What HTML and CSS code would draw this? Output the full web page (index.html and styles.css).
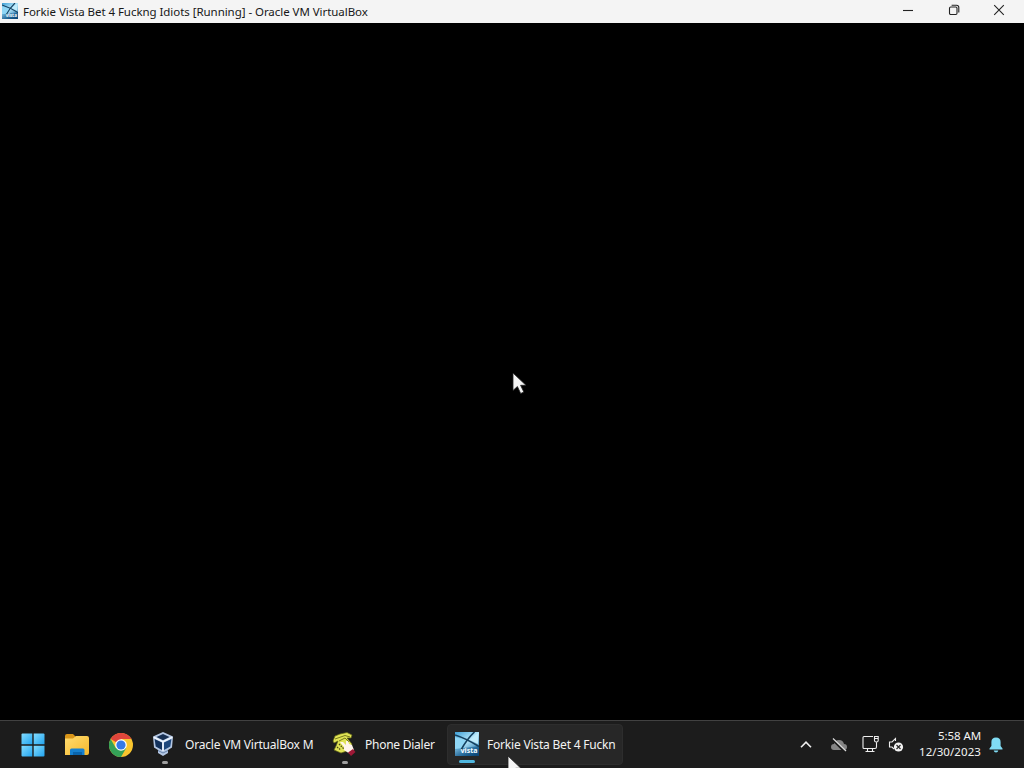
FILE: index.html
```html
<!DOCTYPE html>
<html lang="en">
<head>
<meta charset="utf-8">
<title>Oracle VM VirtualBox</title>
<link rel="stylesheet" href="styles.css">
</head>
<body>
<svg width="0" height="0" class="defs">
  <defs>
    <linearGradient id="sky" x1="0" y1="0" x2=".7" y2="1"><stop offset="0" stop-color="#3d9fd6"/><stop offset=".5" stop-color="#b5e6fa"/><stop offset="1" stop-color="#2577ae"/></linearGradient>
    <linearGradient id="win" x1="0" y1="0" x2="1" y2="1"><stop offset="0" stop-color="#82dcff"/><stop offset="1" stop-color="#22a4ef"/></linearGradient>
    <linearGradient id="folder" x1="0" y1="0" x2="1" y2="1"><stop offset="0" stop-color="#ffdc70"/><stop offset="1" stop-color="#f5b72c"/></linearGradient>
    <linearGradient id="shade" x1="0" y1="0" x2="1" y2="1"><stop offset="0" stop-color="#1e6fa6" stop-opacity=".3"/><stop offset="1" stop-color="#0a4170"/></linearGradient>
    <symbol id="vista" viewBox="0 0 24 24">
      <rect width="24" height="24" fill="url(#sky)"/>
      <path d="M0 5L12 9L6 18H0Z" fill="#8fd6f5"/>
      <path d="M15 8L23 1V12Z" fill="#c0ecfc"/>
      <path d="M0 17L24 14V24H0Z" fill="url(#shade)"/>
      <path d="M0 3Q11 6.5 24 14.5" fill="none" stroke="#14405f" stroke-width="1.6"/>
      <path d="M19.5 0Q12 7 6 18" fill="none" stroke="#14405f" stroke-width="1.6"/>
      <text x="5.5" y="20.5" class="vista-text" textLength="17" lengthAdjust="spacingAndGlyphs">vista</text>
    </symbol>
    <symbol id="pointer" viewBox="0 0 16 24"><path d="M1 1V18.5L5.4 14.5L8.7 21.5L11.8 20L8.6 13.3H14Z" fill="#f5f5f5" stroke="#222" stroke-width=".8"/></symbol>
  </defs>
</svg>
<div class="desktop">
  <header class="titlebar">
    <svg class="title-icon"><use href="#vista"/></svg>
    <span class="title">Forkie Vista Bet 4 Fuckng Idiots [Running] - Oracle VM VirtualBox</span>
    <div class="controls">
      <svg viewBox="0 0 12 12"><path d="M1 6.5H11"/></svg>
      <svg viewBox="0 0 12 12"><rect x="1.5" y="3" width="7.5" height="7.5" rx="1.2"/><path d="M3.6 1.2H8.5Q10.8 1.2 10.8 3.5V8.5"/></svg>
      <svg viewBox="0 0 12 12"><path d="M1.2 1.2L10.8 10.8M10.8 1.2L1.2 10.8"/></svg>
    </div>
  </header>
  <main class="screen"></main>
  <footer class="taskbar">
    <div class="launchers">
      <svg viewBox="0 0 24 24"><g fill="url(#win)"><path d="M1.5 .5H11.3V11.3H.5V1.5Q.5 .5 1.5 .5Z"/><path d="M12.7 .5H22.5Q23.5 .5 23.5 1.5V11.3H12.7Z"/><path d="M.5 12.7H11.3V23.5H1.5Q.5 23.5 .5 22.5Z"/><path d="M12.7 12.7H23.5V22.5Q23.5 23.5 22.5 23.5H12.7Z"/></g></svg>
      <svg viewBox="0 0 24 24"><path d="M0 3Q0 1 2 1H8L11 4V8H0Z" fill="#d99518"/><path d="M0 5.5H8L11 3H22Q24 3 24 5V20Q24 22 22 22H0Z" fill="url(#folder)"/><path d="M5 22V17Q5 15.5 6.5 15.5H18Q19.5 15.5 19.5 17V22Z" fill="#1680cf"/><path d="M8 22V19H17V22Z" fill="#0964ac"/></svg>
      <svg viewBox="0 0 24 24"><circle cx="12" cy="12" r="12" fill="#f9c52e"/><path d="M12 12L1.6 6A12 12 0 0 1 22.4 6H12Z" fill="#df453b"/><path d="M1.6 6A12 12 0 0 0 12 24L17.2 15L12 12L6.8 15Z" fill="#34a257"/><circle cx="12" cy="12" r="5.8" fill="#fff"/><circle cx="12" cy="12" r="4.6" fill="#3479e7"/></svg>
    </div>
    <div class="task vb">
      <svg viewBox="0 0 24 26" class="task-icon"><path d="M11 0L21 4.5L20 15.5L16 18V21L11 24L6 21V18L2 15.5L1 4.5Z" fill="#b4c7e3"/><path d="M4.5 5L11 2L17.5 5L11 8.2Z" fill="#173053"/><path d="M2.6 7L10 10.6V18L3.7 14.6Z" fill="#12315c"/><path d="M12 10.6L19.4 7L18.3 14.6L12 18Z" fill="#1d477d"/><path d="M1.7 5.3L11 9.6L20.3 5.3M11 9.5V19" fill="none" stroke="#edf5ff" stroke-width="1.5"/><path d="M6 18.5L11 21L16 18.5" fill="none" stroke="#6581a9"/></svg>
      <span class="label">Oracle VM VirtualBox M</span><i class="dot"></i>
    </div>
    <div class="task phone">
      <svg viewBox="0 0 24 26" class="task-icon"><path d="M1 9L3 4L8 2L15 .5L20 3L19 6L15 6L20 12L18 18L9 21L2 18L4 14L6 9L2 11Z" fill="#e0e355" stroke="#626515" stroke-width=".7"/><path d="M3 7L13 3.5L18 5M7 9L13 6L17 10" fill="none" stroke="#77791e" stroke-width="1"/><path d="M5 15L9 18M7 12L12 17" stroke="#4a4b16" stroke-width="1.3" stroke-dasharray="1.5 1"/><path d="M8 10L11 10L14 13V9L16 9L17 12L20 13L22 18L18 22L12 18L12 15Z" fill="#fff5eb"/><path d="M16 20.5L21 17L23.5 20L19 24Z" fill="#9d1836"/></svg>
      <span class="label">Phone Dialer</span><i class="dot"></i>
    </div>
    <div class="task active">
      <svg class="task-icon square"><use href="#vista"/></svg>
      <span class="label">Forkie Vista Bet 4 Fuckn</span><i class="dot current"></i>
    </div>
    <div class="tray">
      <svg class="chevron" viewBox="0 0 12 12"><path d="M1 8.2L6 3.2L11 8.2"/></svg>
      <svg class="cloud" viewBox="0 0 18 16"><path d="M4 13Q1 13 1 10Q1 7 4 7Q5 3 9 3Q13 3 14 7Q17 7 17 10Q17 13 14 13Z" fill="#858585"/><path d="M2 2L15 15" stroke="#1c1c1c" stroke-width="2.4"/><path d="M3 1.5L16 14" stroke="#ddd" stroke-width="1.2"/></svg>
      <svg class="network" viewBox="0 0 18 18"><path d="M11 1.5H2Q1 1.5 1 2.5V12.5Q1 13.5 2 13.5H13Q14.5 13.5 14.5 12V7M5.5 14V16.5M10.5 14V16.5M3.5 16.5H12.5M12.5 1.5H16.2V5.5Q16.2 7 14.4 7Q12.5 7 12.5 5.5ZM12.5 3.5H16"/></svg>
      <svg class="sound" viewBox="0 0 16 16"><path d="M7.5 4V1.5L4 5H1.5V10H4L6 12" fill="none" stroke="#eee" stroke-width="1.1"/><circle cx="10.5" cy="10" r="4.6" fill="#f3f3f3"/><path d="M8.5 8L12.5 12M12.5 8L8.5 12" stroke="#292929" stroke-width="1.2"/></svg>
      <div class="clock"><span class="time">5:58 AM</span><span class="date">12/30/2023</span></div>
      <svg class="bell" viewBox="0 0 14 16"><path d="M7 .5Q2.4 .5 2.4 5V9L.5 11.5V12.5H13.5V11.5L11.6 9V5Q11.6 .5 7 .5Z"/><path d="M4.7 13.5H9.3Q9 15.5 7 15.5Q5 15.5 4.7 13.5Z"/></svg>
    </div>
  </footer>
  <svg class="pointer center"><use href="#pointer"/></svg>
  <svg class="pointer lower"><use href="#pointer"/></svg>
</div>
</body>
</html>
```
FILE: styles.css
```css
* { box-sizing: border-box; }
body { margin: 0; background: #000; overflow: hidden; font: 12px/16px "Noto Sans", sans-serif; }
.defs { position: absolute; }
.desktop { position: relative; width: 1024px; height: 768px; display: flex; flex-direction: column; overflow: hidden; }
.titlebar { height: 23px; background: #f4f4f4; color: #171717; display: flex; align-items: center; padding: 0 19px 0 2px; }
.title-icon { width: 16px; height: 16px; margin-top: -1px; }
.title { margin-left: 5px; font-size: 11.5px; letter-spacing: -.05px; white-space: nowrap; }
.controls { display: flex; margin-left: auto; gap: 33.5px; margin-top: -3px; }
.controls svg { width: 12px; height: 12px; fill: none; stroke: #222; stroke-width: 1.1; }
.vista-text { font: bold 7px "Noto Sans", sans-serif; fill: #f4fbff; }
.screen { flex: 1; background: #000; }
.taskbar { height: 48px; background: #1c1c1c; border-top: 1px solid #414141; display: flex; align-items: center; color: #f3f3f3; padding: 0 20px 0 20.5px; }
.launchers { display: flex; gap: 20.3px; width: 131.5px; }
.launchers svg { width: 24px; height: 24px; flex: none; }
.task { position: relative; height: 41px; display: flex; align-items: center; padding-left: 7px; border-radius: 4px; }
.vb { width: 180px; }
.phone { width: 115px; }
.vb, .phone { padding-left: 0; }
.active { width: 176px; background: #272727; border: 1px solid #2d2d2d; }
.task-icon { width: 24px; height: 26px; flex: none; }
.square { height: 24px; margin-top: -2px; }
.label { margin-left: 9px; white-space: nowrap; letter-spacing: -.2px; }
.phone .label { letter-spacing: -.25px; }
.active .label { margin-left: 8px; }
.dot { position: absolute; left: 10px; bottom: 1px; width: 6px; height: 3px; border-radius: 2px; background: #a0a0a0; }
.current { left: 11px; width: 16px; background: #50b7df; }
.tray { margin-left: auto; display: flex; align-items: center; }
.chevron { width: 12px; height: 12px; fill: none; stroke: #eee; stroke-width: 1.6; margin-right: 18px; }
.cloud { width: 18px; height: 16px; margin-right: 14px; }
.network { width: 18px; height: 18px; fill: none; stroke: #eee; stroke-width: 1.1; margin-right: 8px; margin-top: -1px; }
.sound { width: 16px; height: 16px; }
.clock { width: 77px; margin-top: -2px; display: flex; flex-direction: column; align-items: flex-end; font-size: 11.5px; letter-spacing: .08px; white-space: nowrap; }
.time { letter-spacing: -.1px; }
.bell { width: 14px; height: 16px; margin-left: 8px; margin-right: 1px; fill: #80dcf4; }
.pointer { position: absolute; width: 16px; height: 24px; }
.center { left: 512px; top: 372px; }
.lower { left: 507px; top: 755px; }
```
